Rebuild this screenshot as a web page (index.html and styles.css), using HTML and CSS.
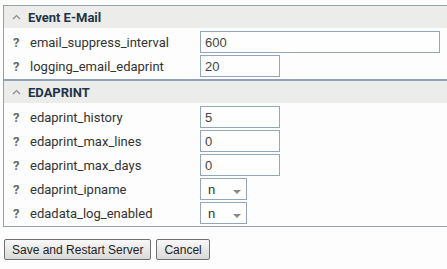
FILE: index.html
```html
<!DOCTYPE html>
<html lang="en">

<head>
    <meta charset="UTF-8">
    <title>Server Settings</title>
    <link rel="stylesheet" href="styles.css">
</head>

<body>

    <div class="panel">
        <div class="section">
            <div class="section-head">
                <svg class="caret" width="9" height="6" viewBox="0 0 9 6"><polyline points="1,5 4.5,1.5 8,5" fill="none" stroke="#8a8a8a" stroke-width="1.2"/></svg>
                <span>Event E-Mail</span>
            </div>
            <div class="rows">
                <div class="row">
                    <span class="help">?</span>
                    <span class="name">email_suppress_interval</span>
                    <input class="field wide" type="text" value="600">
                </div>
                <div class="row">
                    <span class="help">?</span>
                    <span class="name">logging_email_edaprint</span>
                    <input class="field" type="text" value="20">
                </div>
            </div>
        </div>

        <div class="section second">
            <div class="section-head">
                <svg class="caret" width="9" height="6" viewBox="0 0 9 6"><polyline points="1,5 4.5,1.5 8,5" fill="none" stroke="#8a8a8a" stroke-width="1.2"/></svg>
                <span>EDAPRINT</span>
            </div>
            <div class="rows">
                <div class="row">
                    <span class="help">?</span>
                    <span class="name">edaprint_history</span>
                    <input class="field" type="text" value="5">
                </div>
                <div class="row">
                    <span class="help">?</span>
                    <span class="name">edaprint_max_lines</span>
                    <input class="field" type="text" value="0">
                </div>
                <div class="row">
                    <span class="help">?</span>
                    <span class="name">edaprint_max_days</span>
                    <input class="field" type="text" value="0">
                </div>
                <div class="row">
                    <span class="help">?</span>
                    <span class="name">edaprint_ipname</span>
                    <div class="dropdown">n<span class="arrow"></span></div>
                </div>
                <div class="row">
                    <span class="help">?</span>
                    <span class="name">edadata_log_enabled</span>
                    <div class="dropdown">n<span class="arrow"></span></div>
                </div>
            </div>
        </div>
    </div>

    <div class="actions">
        <button type="button">Save and Restart Server</button>
        <button type="button">Cancel</button>
    </div>

</body>

</html>
```

FILE: styles.css
```css
* {
    box-sizing: border-box;
}

body {
    margin: 0;
    padding: 5px 0 0 3px;
    background: #fcfdfc;
    font-family: Roboto, "Liberation Sans", sans-serif;
    font-size: 13px;
    color: #333;
    overflow: hidden;
}

.panel {
    border-left: 1px solid #90a2b8;
    border-top: 1px solid #90a2b8;
    border-bottom: 1px solid #90a2b8;
}

.section.second {
    border-top: 2px solid #90a2b8;
}

.section-head {
    height: 22px;
    background: #ececeb;
    display: flex;
    align-items: center;
    padding-left: 8px;
    font-weight: bold;
    color: #1f3448;
}

.caret {
    margin-right: 7px;
    margin-top: -1px;
}

.rows {
    padding: 2px 0 1px;
}

.row {
    height: 24px;
    display: grid;
    grid-template-columns: 17px 170px auto;
    align-items: center;
    padding-left: 9px;
}

.help {
    font-weight: bold;
    color: #6a6a6a;
}

.name {
    color: #333;
}

.field {
    width: 80px;
    height: 22px;
    border: 1px solid #93a6bc;
    background: #fdfefd;
    font-family: "Liberation Sans", Arial, sans-serif;
    font-size: 13px;
    color: #444;
    padding: 0 4px;
    margin: 0;
}

.field.wide {
    width: 240px;
}

.dropdown {
    width: 47px;
    height: 22px;
    border: 1px solid #93a6bc;
    background: #fdfefd;
    font-family: "Liberation Sans", Arial, sans-serif;
    color: #333;
    display: flex;
    align-items: center;
    padding-left: 7px;
    position: relative;
}

.arrow {
    position: absolute;
    left: 32px;
    top: 11px;
    border-left: 4px solid transparent;
    border-right: 4px solid transparent;
    border-top: 4px solid #888;
}

.actions {
    display: flex;
    gap: 5px;
    margin-top: 12px;
    padding-left: 1px;
}

button {
    height: 21px;
    padding: 0 7px;
    font-family: "Liberation Sans", Arial, sans-serif;
    font-size: 12px;
    color: #222;
    background: linear-gradient(#f8f8f8, #d9d9d9);
    border: 1px solid #6f6f6f;
    border-radius: 2px;
}
```
